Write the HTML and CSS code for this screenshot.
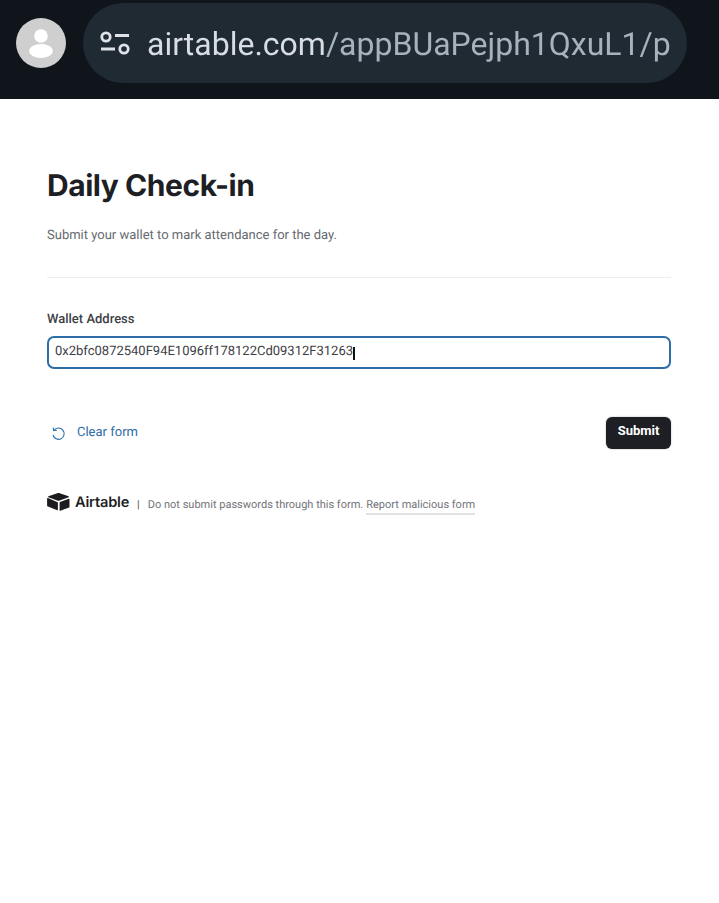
FILE: index.html
```html
<!DOCTYPE html>
<html lang="en">
<head>
    <meta charset="UTF-8">
    <meta name="viewport" content="width=device-width, initial-scale=1.0">
    <title>Daily Check-in</title>
    <link rel="stylesheet" href="styles.css">
</head>
<body>
    <header class="browser-bar">
        <div class="avatar">
            <svg width="50" height="50" viewBox="0 0 50 50">
                <circle cx="25" cy="18" r="6.8" fill="#fff"/>
                <ellipse cx="25" cy="33" rx="11.8" ry="7" fill="#fff"/>
            </svg>
        </div>
        <div class="url-pill">
            <svg class="tune-icon" width="32" height="26" viewBox="0 0 32 26" fill="none" stroke="#dfe3e8" stroke-width="2.8">
                <circle cx="6" cy="7" r="4.2"/>
                <path d="M15 5.5h14"/>
                <path d="M1 19h14"/>
                <circle cx="24" cy="19" r="4.2"/>
            </svg>
            <div class="url-text"><span class="url-host">airtable.com</span>/appBUaPejph1QxuL1/p</div>
        </div>
    </header>

    <main class="form-page">
        <h1 class="form-title">Daily Check-in</h1>
        <p class="form-desc">Submit your wallet to mark attendance for the day.</p>
        <hr class="divider">

        <label class="field-label">Wallet Address</label>
        <div class="field-input">
            <span>0x2bfc0872540F94E1096ff178122Cd09312F31263</span><span class="caret"></span>
        </div>

        <div class="form-actions">
            <a class="clear-link">
                <svg width="15" height="15" viewBox="0 0 16 16" fill="none" stroke="#2d6da8" stroke-width="1.2">
                    <path d="M3.2 4.6A6 6 0 1 1 2.2 9.6"/>
                    <path d="M2.4 1.8l.6 3.2 3.2-.4"/>
                </svg>
                <span>Clear form</span>
            </a>
            <button class="submit-btn">Submit</button>
        </div>

        <footer class="form-footer">
            <svg class="logo-mark" width="23" height="18" viewBox="0 0 23 18">
                <path d="M10.3.3 1.4 3.3c-.5.2-.5.8 0 1l8.9 3.2c.8.3 1.6.3 2.4 0l8.9-3.2c.5-.2.5-.8 0-1L12.7.3c-.8-.3-1.6-.3-2.4 0z" fill="#1c1c20"/>
                <path d="M12.6 9.4v7.8c0 .4.4.7.8.5l8.7-3.3c.3-.1.4-.3.4-.5V6.2c0-.4-.4-.7-.8-.5l-8.7 3.2c-.2.1-.4.3-.4.5z" fill="#1c1c20"/>
                <path d="M10.6 9.3 1 5.1c-.4-.2-.9.1-.9.5v7.2c0 .2.1.4.3.5l9.9 4c.4.2.6-.1.6-.5V9.8c0-.2-.1-.4-.3-.5z" fill="#1c1c20"/>
            </svg>
            <span class="wordmark">Airtable</span>
            <span class="sep">|</span>
            <span class="footer-note">Do not submit passwords through this form.</span>
            <a class="report-link">Report malicious form</a>
        </footer>
    </main>
</body>
</html>
```

FILE: styles.css
```css
body {
    margin: 0;
    background: #fff;
    font-family: Roboto, "Liberation Sans", sans-serif;
    color: #1d1f25;
    text-rendering: geometricPrecision;
}

/* barra del navegador */
.browser-bar {
    display: flex;
    align-items: flex-start;
    gap: 17px;
    height: 99px;
    box-sizing: border-box;
    padding: 3px 32px 0 16px;
    background: #0f151b;
}

.avatar {
    width: 50px;
    height: 50px;
    margin-top: 15px;
    border-radius: 50%;
    background: #cfcfcf;
    overflow: hidden;
}

.url-pill {
    display: flex;
    align-items: center;
    flex: 1;
    height: 80px;
    box-sizing: border-box;
    padding-left: 17px;
    border-radius: 40px;
    background: #1f2a33;
    overflow: hidden;
}

.tune-icon {
    flex-shrink: 0;
    margin-right: 15px;
}

.url-text {
    padding-top: 1px;
    font-size: 32px;
    line-height: 1;
    white-space: nowrap;
    color: #a7b2be;
    will-change: transform;
}

.url-host {
    color: #d8dde3;
}

/* formulario */
.form-page {
    padding: 69px 48px 0 47px;
}

.form-title {
    margin: 0;
    font-family: Inter, "Noto Sans", sans-serif;
    font-size: 30px;
    line-height: 36px;
    font-weight: 700;
    letter-spacing: -0.45px;
}

.form-desc {
    margin: 23px 0 0;
    font-size: 13px;
    line-height: 18px;
    color: #666a70;
}

.divider {
    height: 1px;
    margin: 32px 0 0;
    border: none;
    background: #eeeeee;
}

.field-label {
    display: block;
    margin-top: 33px;
    font-size: 13px;
    line-height: 18px;
    font-weight: 500;
    color: #3d4045;
}

.field-input {
    display: flex;
    align-items: center;
    height: 33px;
    margin-top: 7px;
    box-sizing: border-box;
    padding: 0 6px 3px;
    border: 2px solid #2d6da8;
    border-radius: 7px;
    font-size: 13px;
    color: #3d4045;
}

.caret {
    width: 2px;
    height: 13px;
    margin-top: 4px;
    background: #111;
}

.form-actions {
    display: flex;
    align-items: center;
    justify-content: space-between;
    margin-top: 48px;
}

.clear-link {
    display: flex;
    align-items: center;
    gap: 11px;
    padding-left: 4px;
    font-size: 13px;
    color: #2d6da8;
}

.clear-link span {
    padding-bottom: 2px;
}

.submit-btn {
    width: 65px;
    height: 32px;
    padding: 0 0 5px;
    border: none;
    border-radius: 6px;
    background: #1d1f25;
    font-family: inherit;
    font-size: 13px;
    font-weight: 700;
    color: #fff;
    box-shadow: 0 0 2px rgba(0, 0, 0, 0.3);
}

.form-footer {
    display: flex;
    align-items: center;
    margin-top: 39px;
    font-size: 11px;
    color: #717479;
}

.logo-mark {
    margin-right: 5px;
}

.wordmark {
    font-family: Inter, "Noto Sans", sans-serif;
    font-size: 14.6px;
    font-weight: 600;
    letter-spacing: -0.2px;
    color: #1d1f25;
}

.sep {
    margin: 0 8px 0 8px;
    padding-top: 6px;
    color: #555;
}

.footer-note {
    padding-top: 6px;
}

.report-link {
    margin-left: 3px;
    padding: 10px 0 2px;
    border-bottom: 2px solid #e2e2e2;
}
```
